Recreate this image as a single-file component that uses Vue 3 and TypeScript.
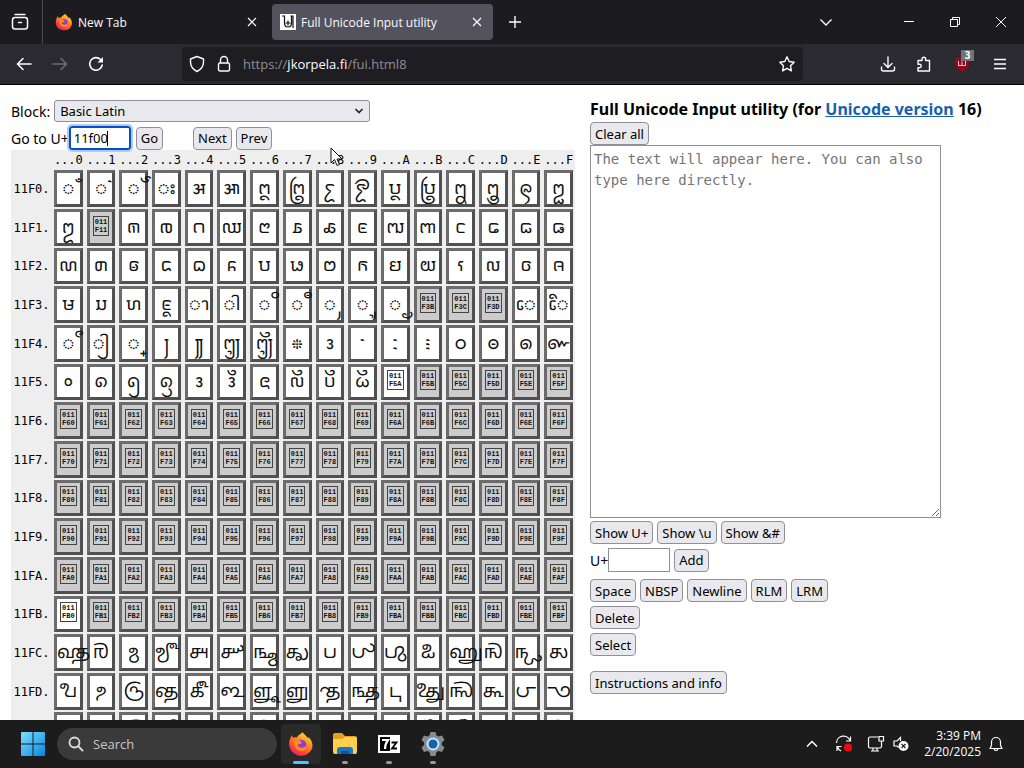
<script setup lang="ts">
import { ref } from 'vue'

interface Cell {
  code: string
  char: string
  kind: 'glyph' | 'missing' | 'unassigned'
}

const hex = '0123456789ABCDEF'.split('')
const blankCodes = new Set(['11F11', '11F3B', '11F3C', '11F3D'])
const newCodes = new Set(['11F5A', '11FB0'])

function makeCell(code: string): Cell {
  const value = parseInt(code, 16)
  let kind: Cell['kind'] = 'glyph'
  if (newCodes.has(code)) kind = 'missing'
  else if (blankCodes.has(code) || (value > 0x11f5a && value < 0x11fc0)) kind = 'unassigned'
  return { code, char: String.fromCodePoint(value), kind }
}

const rows = hex.slice(0, 15).map((digit) => ({
  label: `11F${digit}.`,
  cells: hex.map((low) => makeCell(`11F${digit}${low}`)),
}))

const target = ref('11f00')
const output = ref('')
const extra = ref('')
const block = ref('Basic Latin')
</script>

<template>
  <div class="desktop">
    <header class="tabs">
      <button class="view" aria-label="Tab overview">
        <svg width="18" height="18" viewBox="0 0 18 18" fill="none" stroke="#fbfbfe" stroke-width="1.5" stroke-linecap="round"><path d="M4 1.500h10" /><path d="M1.500 7q0-2.500 2.500-2.500h10q2.500 0 2.500 2.500v6.500q0 2.500-2.500 2.500H4q-2.500 0-2.500-2.500z" /><path d="M7.500 9.500h3" /></svg>
      </button>
      <div class="tab">
        <svg width="18" height="18" viewBox="0 0 24 24"><use href="#fox" /></svg>
        <span>New Tab</span>
        <button aria-label="Close New Tab"><svg width="10" height="10" viewBox="0 0 10 10" stroke="#fbfbfe" stroke-width="1.2"><path d="M1 1l8 8M9 1l-8 8" /></svg></button>
      </div>
      <div class="tab active">
        <svg width="16" height="16" viewBox="0 0 16 16"><path fill="#fff" d="M0 0h16v16H0z" /><path d="M2 2h2.500v7q0 4 3.500 4t3.500-4V2M10.500 2H13v12M8 6.500v5M5.500 9h5" fill="none" stroke="#111" stroke-width="1.200" /></svg>
        <span>Full Unicode Input utility</span>
        <button aria-label="Close Full Unicode Input utility"><svg width="10" height="10" viewBox="0 0 10 10" stroke="#fbfbfe" stroke-width="1.2"><path d="M1 1l8 8M9 1l-8 8" /></svg></button>
      </div>
      <button class="plus" aria-label="New tab"><svg width="12" height="12" viewBox="0 0 12 12" stroke="#fbfbfe" stroke-width="1.4"><path d="M6 0v12M0 6h12" /></svg></button>
      <div class="window-buttons">
        <button aria-label="List all tabs"><svg width="14" height="14" viewBox="0 0 14 14" fill="none" stroke="#fbfbfe" stroke-width="1.4"><path d="M1.500 4.500L7 10l5.500-5.500" /></svg></button>
        <span class="gap"></span>
        <button aria-label="Minimize"><svg width="12" height="12" viewBox="0 0 12 12" stroke="#fff"><path d="M1 5.500h10" /></svg></button>
        <button aria-label="Restore"><svg width="12" height="12" viewBox="0 0 12 12" fill="none" stroke="#fff"><path d="M1.500 3.500h7v7h-7zM3.500 3.500v-2h7v7h-2" /></svg></button>
        <button aria-label="Close"><svg width="12" height="12" viewBox="0 0 12 12" stroke="#fff"><path d="M1 1l10 10M11 1L1 11" /></svg></button>
      </div>
    </header>

    <nav class="toolbar">
      <button aria-label="Back"><svg width="16" height="14" viewBox="0 0 16 14" fill="none" stroke="#fbfbfe" stroke-width="1.600" stroke-linecap="round" stroke-linejoin="round"><path d="M7 1.500L1.500 7 7 12.500M2 7h13" /></svg></button>
      <button aria-label="Forward"><svg width="16" height="14" viewBox="0 0 16 14" fill="none" stroke="#6c6b73" stroke-width="1.600" stroke-linecap="round" stroke-linejoin="round"><path d="M9 1.500L14.500 7 9 12.500M14 7H1" /></svg></button>
      <button aria-label="Reload"><svg width="16" height="16" viewBox="0 0 16 16" fill="none" stroke="#fbfbfe" stroke-width="1.600" stroke-linecap="round"><path d="M14.200 9A6.300 6.300 0 1 1 12.500 3.500" /><path d="M15 1v5.500H9.500z" fill="#fbfbfe" stroke="none" /></svg></button>
      <div class="address">
        <svg width="16" height="18" viewBox="0 0 16 18" fill="none" stroke="#fbfbfe" stroke-width="1.400"><path d="M8 1.500l6.500 2.500v3c0 4.500-2.500 7.500-6.500 9.500C4 14.500 1.500 11.500 1.500 7V4z" stroke-linejoin="round" /></svg>
        <svg width="14" height="18" viewBox="0 0 14 18" fill="none" stroke="#fbfbfe" stroke-width="1.400"><rect x="1.500" y="8" width="11" height="8" rx="1.500" /><path d="M3.500 8V5a3.500 3.500 0 0 1 7 0v3" /></svg>
        <span class="url">https://<b>jkorpela.fi</b>/fui.html8</span>
        <svg width="18" height="18" viewBox="0 0 18 18" fill="none" stroke="#fbfbfe" stroke-width="1.400" stroke-linejoin="round"><path d="M9 1.800l2.200 4.700 5 .7-3.700 3.500.9 5.200L9 13.400l-4.400 2.500.9-5.200L1.800 7.200l5-.7z" /></svg>
      </div>
      <div class="tools">
        <button aria-label="Downloads"><svg width="16" height="16" viewBox="0 0 16 16" fill="none" stroke="#fbfbfe" stroke-width="1.400" stroke-linecap="round"><path d="M8 1v10M4 7.500l4 4 4-4M1.500 11v2q0 2 2 2h9q2 0 2-2v-2" /></svg></button>
        <button aria-label="Extensions"><svg width="16" height="16" viewBox="0 0 16 16" fill="none" stroke="#fbfbfe" stroke-width="1.400" stroke-linejoin="round"><path d="M2 4.500h4V3a1.800 1.800 0 0 1 3.600 0v1.500H13.500V15H2v-3.300h1.500a1.700 1.700 0 0 0 0-3.500H2z" /></svg></button>
        <button class="shield" aria-label="Blocker, 3 blocked"><svg width="16" height="16" viewBox="0 0 16 16"><path fill="#900a1d" d="M8 0l7 2.500V7q0 6-7 9-7-3-7-9V2.500z" /><path d="M4.500 5v4.500h7V5M8 5.500v4" stroke="#e8c8cc" fill="none" /></svg><i>3</i></button>
        <button aria-label="Menu"><svg width="14" height="12" viewBox="0 0 14 12" stroke="#fbfbfe" stroke-width="1.400"><path d="M1 1.500h12M1 6h12M1 10.500h12" /></svg></button>
      </div>
    </nav>

    <main class="page">
      <section class="chart">
        <div class="line">
          <label for="block">Block:</label>
          <span class="drop">
            <select id="block" v-model="block"><option>Basic Latin</option></select>
            <svg width="10" height="8" viewBox="0 0 10 8" fill="none" stroke="#222" stroke-width="1.600"><path d="M1.500 2L5 5.500 8.500 2" /></svg>
          </span>
        </div>
        <div class="line goto">
          <label for="target">Go to U+</label>
          <span class="field"><input id="target" v-model="target" class="focused" /><span class="caret"></span></span>
          <button class="push">Go</button>
          <button class="push next">Next</button>
          <button class="push">Prev</button>
        </div>
        <table>
          <thead>
            <tr><td class="corner"></td><th v-for="h in hex" :key="h" scope="col">...{{ h }}</th></tr>
          </thead>
          <tbody>
            <tr v-for="row in rows" :key="row.label">
              <th scope="row">{{ row.label }}</th>
              <td v-for="cell in row.cells" :key="cell.code">
                <button class="cell" :class="cell.kind">
                  <template v-if="cell.kind === 'glyph'">{{ cell.char }}</template>
                  <span v-else class="hexbox">0{{ cell.code.slice(0, 2) }}<br />{{ cell.code.slice(2) }}</span>
                </button>
              </td>
            </tr>
          </tbody>
        </table>
      </section>

      <section class="editor">
        <h1>Full Unicode Input utility (for <a href="#">Unicode version</a> 16)</h1>
        <div class="group clear"><button class="push">Clear all</button></div>
        <textarea v-model="output" aria-label="Text" placeholder="The text will appear here. You can also type here directly."></textarea>
        <div class="group show"><button class="push">Show U+</button><button class="push">Show \u</button><button class="push">Show &amp;#</button></div>
        <div class="group add"><label for="extra">U+</label><input id="extra" v-model="extra" /><button class="push">Add</button></div>
        <div class="group insert"><button class="push">Space</button><button class="push">NBSP</button><button class="push">Newline</button><button class="push">RLM</button><button class="push">LRM</button></div>
        <div class="group edit"><button class="push">Delete</button></div>
        <div class="group edit"><button class="push">Select</button></div>
        <div class="group info"><button class="push">Instructions and info</button></div>
      </section>
    </main>

    <footer class="taskbar">
      <button class="start" aria-label="Start"><svg width="24" height="24" viewBox="0 0 24 24"><defs><linearGradient id="win" x2="1" y2="1"><stop stop-color="#7be0ff" /><stop offset="1" stop-color="#0a84e0" /></linearGradient></defs><path fill="url(#win)" d="M0 1q0-1 1-1h10.500v11.500H0zM12.500 0H23q1 0 1 1v10.500H12.500zM0 12.500h11.500V24H1q-1 0-1-1zM12.500 12.500H24V23q0 1-1 1H12.500z" /></svg></button>
      <label class="search"><svg width="16" height="16" viewBox="0 0 16 16" fill="none" stroke="#ddd" stroke-width="1.800" stroke-linecap="round"><circle cx="6.500" cy="6.500" r="5" /><path d="M10.200 10.200L14.500 14.500" /></svg><input placeholder="Search" aria-label="Search" /></label>
      <div class="apps">
        <button class="app current" aria-label="Firefox">
          <svg width="26" height="26" viewBox="0 0 24 24">
            <defs>
              <linearGradient id="flame" x1=".8" y1="0" x2=".2" y2="1"><stop stop-color="#ffe34d" /><stop offset=".4" stop-color="#ff8a1f" /><stop offset=".75" stop-color="#ff3f3d" /><stop offset="1" stop-color="#e3157a" /></linearGradient>
              <g id="fox"><path fill="url(#flame)" d="M13.500 1c.5 2 4 3.500 5 6l.5-1.500c3 3 4.500 7 3 11A11 11 0 0 1 1 12.500C1 9 2 6 4 4l.5 2.500Q5.500 5.500 8 6C9.500 3.500 12 3 13.500 1z" /><circle cx="12" cy="13" r="5" fill="#8a3fd0" /><path fill="#ff8a1f" d="M5 9q3-2 6 0l2 1.500q-1.500 2-4 2 0 3 4 3 3 0 4.500-3Q17 19 11.500 18.500 6 18 5 9z" /></g>
            </defs>
            <use href="#fox" />
          </svg>
        </button>
        <button class="app" aria-label="File Explorer"><svg width="26" height="24" viewBox="0 0 26 24"><path fill="#e6a01c" d="M1 3q0-2 2-2h7l3 3h10q2 0 2 2v4H1z" /><path fill="#ffd04f" d="M1 7h9l3-2h10q2 0 2 2v13q0 2-2 2H3q-2 0-2-2z" /><path fill="#1779c4" d="M5 22v-4q0-3 3-3h10q3 0 3 3v4z" /><path fill="#0a559b" d="M9 22v-2q0-1 1-1h6q1 0 1 1v2z" /></svg></button>
        <button class="app" aria-label="7-Zip"><svg width="22" height="18" viewBox="0 0 22 18"><path fill="#fff" d="M0 0h22v18H0z" /><path fill="#000" d="M2 2h10v14H2z" /><path d="M4 5h6q-3 4-3 9" stroke="#fff" stroke-width="2.200" fill="none" /><path d="M13.500 7.500h5l-4.500 6h5" stroke="#000" stroke-width="1.800" fill="none" /></svg></button>
        <button class="app" aria-label="Settings"><svg width="26" height="26" viewBox="0 0 26 26"><path fill="#858b91" d="M10.500 1h5l1 3.500 2 1.100 3.500-1 2.500 4.300-2.600 2.600v2.500l2.600 2.600-2.500 4.300-3.500-1-2 1.100-1 4h-5l-1-4-2-1.100-3.500 1-2.500-4.300L4.100 14v-2.500L1.500 8.900 4 4.600l3.500 1 2-1.100z" /><circle cx="13" cy="13" r="6.500" fill="#c9e5fa" /><circle cx="13" cy="13" r="4.500" fill="#1464a8" /></svg></button>
      </div>
      <div class="tray">
        <svg width="12" height="12" viewBox="0 0 12 12" fill="none" stroke="#fff" stroke-width="1.500"><path d="M1 8.500l5-5 5 5" /></svg>
        <svg class="sync" width="18" height="18" viewBox="0 0 18 18" fill="none" stroke="#fff" stroke-width="1.200"><path d="M1.500 8A7 7 0 0 1 15 5.500M15.500 1.500v4.500H11M2.500 11.500A7 7 0 0 0 6 16M2 16v-4.500h4.500" /><circle cx="13" cy="12.500" r="4" fill="#f00b0b" stroke="none" /></svg>
        <svg class="net" width="18" height="18" viewBox="0 0 18 18" fill="none" stroke="#fff" stroke-width="1.200"><path d="M11 2H3q-1.500 0-1.500 1.500v8Q1.500 13 3 13h10q1.500 0 1.500-1.500V7M4 16h8M6 13v3M10 13v3M12 1.500h4.500V6H12zM14.500 6v3" /></svg>
        <svg class="sound" width="18" height="18" viewBox="0 0 18 18" fill="none" stroke="#fff" stroke-width="1.200"><path d="M8.500 6V2.500L5 6H2v5h3l1.500 1.500" /><circle cx="11.500" cy="11" r="5" fill="#fff" stroke="none" /><path d="M9.500 9l4 4M13.500 9l-4 4" stroke="#222" /></svg>
        <div class="clock"><span>3:39 PM</span><span>2/20/2025</span></div>
        <svg width="14" height="16" viewBox="0 0 14 16" fill="none" stroke="#fff" stroke-width="1.200"><path d="M1 12.500h12l-1.500-3V6a4.500 4.500 0 0 0-9 0v3.500zM5 12.500q.2 2 2 2t2-2" stroke-linejoin="round" /></svg>
      </div>
    </footer>

    <svg class="pointer" width="14" height="20" viewBox="0 0 14 20"><path fill="#fff" stroke="#111" d="M1 1v15l3.500-3.500L7 18.500l2.500-1L7 12h5z" /></svg>
  </div>
</template>

<style>
body {
  overflow: hidden;
}
</style>

<style scoped>
.desktop {
  position: relative;
  display: flex;
  flex-direction: column;
  height: 100vh;
  font-family: "Noto Sans", "Open Sans", sans-serif;
  font-size: 13px;
  color: #000;
  background: #fff;
}
.desktop * {
  box-sizing: border-box;
}
button,
input {
  font-family: inherit;
}
.tabs button,
.toolbar button,
.taskbar button {
  display: flex;
  align-items: center;
  justify-content: center;
  padding: 0;
  border: 0;
  background: none;
}
.tabs {
  display: flex;
  align-items: center;
  flex: none;
  height: 44px;
  background: #1c1b20;
  color: #fbfbfe;
  font-family: "Open Sans", sans-serif;
  font-size: 12px;
}
.tabs .view {
  width: 43px;
  height: 44px;
  padding-right: 3px;
  border-right: 1px solid #4a4950;
}
.tab {
  display: flex;
  align-items: center;
  gap: 5px;
  width: 221px;
  height: 36px;
  margin-left: 4px;
  padding: 0 8px;
  border-radius: 4px;
}
.tab span {
  flex: 1;
  white-space: nowrap;
}
.tab button {
  width: 16px;
  height: 16px;
}
.tab.active {
  background: #53525d;
}
.tabs .plus {
  width: 44px;
  height: 44px;
}
.window-buttons {
  display: flex;
  margin-left: auto;
}
.window-buttons button {
  width: 46px;
  height: 44px;
}
.window-buttons .gap {
  width: 37px;
}
.toolbar {
  display: flex;
  align-items: center;
  flex: none;
  height: 41px;
  padding-left: 6px;
  border-bottom: 1px solid #000;
  background: #2b2a30;
}
.toolbar button {
  width: 36px;
  height: 36px;
}
.address {
  display: flex;
  align-items: center;
  gap: 12px;
  flex: 1;
  height: 34px;
  margin-left: 68px;
  padding: 0 7px;
  border-radius: 4px;
  background: #1e1d22;
}
.url {
  flex: 1;
  color: #8f8e96;
  font-family: "Open Sans", sans-serif;
  font-size: 13px;
}
.url b {
  color: #fbfbfe;
  font-weight: 400;
}
.tools {
  display: flex;
  margin-left: 67px;
  padding-right: 6px;
}
.tools .shield {
  position: relative;
  width: 40px;
}
.shield i {
  position: absolute;
  top: 4px;
  right: 8px;
  width: 13px;
  height: 11px;
  background: #6f7478;
  color: #fff;
  font-size: 10px;
  font-style: normal;
  font-weight: 700;
  line-height: 11px;
}
.page {
  display: grid;
  grid-template-columns: 564fr 423fr;
  gap: 15px;
  flex: 1;
  min-height: 0;
  overflow: hidden;
  padding: 15px 11px 0;
}
.line {
  display: flex;
  align-items: center;
  height: 22px;
}
.line label {
  white-space: nowrap;
  font-size: 14px;
}
.drop {
  position: relative;
  display: flex;
  align-items: center;
  width: 56%;
  margin-left: 4px;
}
.drop select {
  width: 100%;
  height: 22px;
  padding: 0 5px;
  border: 1px solid #8f8f9d;
  border-radius: 3px;
  appearance: none;
  background: #e9e9ed;
  font-family: inherit;
  font-size: 13px;
  color: #000;
}
.drop svg {
  position: absolute;
  right: 6px;
}
.goto {
  height: 28px;
  padding-top: 4px;
}
.field {
  position: relative;
  display: flex;
  align-items: center;
  margin-right: 5px;
}
.focused {
  width: 62px;
  height: 24px;
  padding: 0 3px;
  border: 2px solid #0a4cc4;
  border-radius: 3px;
  outline: 2px solid #a9cdf6;
  background: #fff;
  font-size: 13px;
}
.caret {
  position: absolute;
  top: 5px;
  left: 38px;
  width: 1px;
  height: 15px;
  background: #000;
}
.push {
  height: 23px;
  padding: 0 4px;
  border: 1px solid #8f8f9d;
  border-radius: 4px;
  background: #e9e9ed;
  font-size: 13px;
  line-height: 20px;
  color: #000;
  white-space: nowrap;
}
.goto .push + .push {
  margin-left: 4px;
}
.goto .push.next {
  margin-left: 30px;
}
table {
  width: 100%;
  border-collapse: collapse;
  table-layout: fixed;
  background: #eee;
  font-family: "DejaVu Sans Mono", monospace;
  font-size: 12px;
}
.corner {
  width: 41px;
}
th {
  padding: 0;
  font-weight: 400;
  text-align: center;
  white-space: nowrap;
}
thead tr {
  height: 19px;
}
tbody tr {
  height: 39px;
}
tbody tr:nth-child(3n) {
  height: 38px;
}
td {
  padding: 1px 2px;
}
.cell {
  display: flex;
  align-items: center;
  justify-content: safe center;
  width: 100%;
  height: 37px;
  padding: 0;
  border: 3px solid;
  border-color: #6c6c6c #505050 #505050 #6c6c6c;
  background: #fff;
  font-family: "Noto Sans Kawi", "Noto Sans Tamil Supplement", "Noto Sans", "DejaVu Sans", sans-serif;
  font-size: 18px;
  color: #111;
}
.cell.glyph {
  padding-top: 6px;
  font-feature-settings: "mark" 0, "mkmk" 0, "abvm" 0, "blwm" 0;
}
tr:nth-child(3n) .cell {
  height: 36px;
}
.cell.unassigned {
  background: #ccc;
}
.hexbox {
  padding: 1px;
  margin-bottom: 4px;
  border: 1px solid #444;
  font-family: "Liberation Mono", monospace;
  font-size: 7px;
  font-weight: 700;
  line-height: 8px;
}
h1 {
  margin: 0;
  height: 22px;
  font-size: 16px;
  line-height: 19px;
  white-space: nowrap;
}
a {
  color: #1a5fae;
}
.group {
  display: flex;
  align-items: center;
  gap: 4px;
}
textarea {
  display: block;
  width: 83%;
  height: 373px;
  padding: 3px;
  border: 1px solid #8f8f9d;
  font-family: "DejaVu Sans Mono", monospace;
  font-size: 14px;
  line-height: 21px;
}
textarea::placeholder {
  color: #757575;
}
.show {
  margin-top: 3px;
}
.add {
  gap: 0;
  margin-top: 4px;
  font-size: 14px;
}
.add input {
  width: 62px;
  height: 24px;
  margin-right: 4px;
  border: 1px solid #8f8f9d;
}
.insert {
  margin-top: 7px;
}
.edit {
  margin-top: 4px;
}
.info {
  margin-top: 15px;
}
.taskbar {
  display: flex;
  align-items: center;
  flex: none;
  height: 48px;
  padding: 0 21px;
  background: #1c1c1c;
  color: #fff;
  font-family: "Open Sans", sans-serif;
}
.search {
  display: flex;
  align-items: center;
  gap: 9px;
  width: 220px;
  height: 32px;
  margin-left: 12px;
  padding: 0 11px;
  border-radius: 16px;
  background: #3a3a3a;
}
.search input {
  min-width: 0;
  border: 0;
  padding: 0;
  background: none;
  font-size: 13px;
}
.search input::placeholder {
  color: #c8c8c8;
}
.apps {
  display: flex;
  gap: 4px;
  margin-left: 4px;
}
.taskbar .app {
  position: relative;
  width: 40px;
  height: 40px;
  border-radius: 4px;
}
.app::after {
  content: "";
  position: absolute;
  bottom: 0;
  width: 6px;
  height: 3px;
  border-radius: 2px;
  background: #999;
}
.taskbar .app.current {
  background: #2a2a2a;
}
.current::after {
  width: 16px;
  background: #4cc2ff;
}
.tray {
  display: flex;
  align-items: center;
  margin-left: auto;
}
.sync {
  margin-left: 17px;
}
.net {
  margin-left: 14px;
}
.sound {
  margin-left: 7px;
}
.clock {
  display: flex;
  flex-direction: column;
  align-items: flex-end;
  margin: 0 8px 0 14px;
  font-size: 12px;
  line-height: 16px;
}
.pointer {
  position: absolute;
  top: 147px;
  left: 330px;
}
</style>
